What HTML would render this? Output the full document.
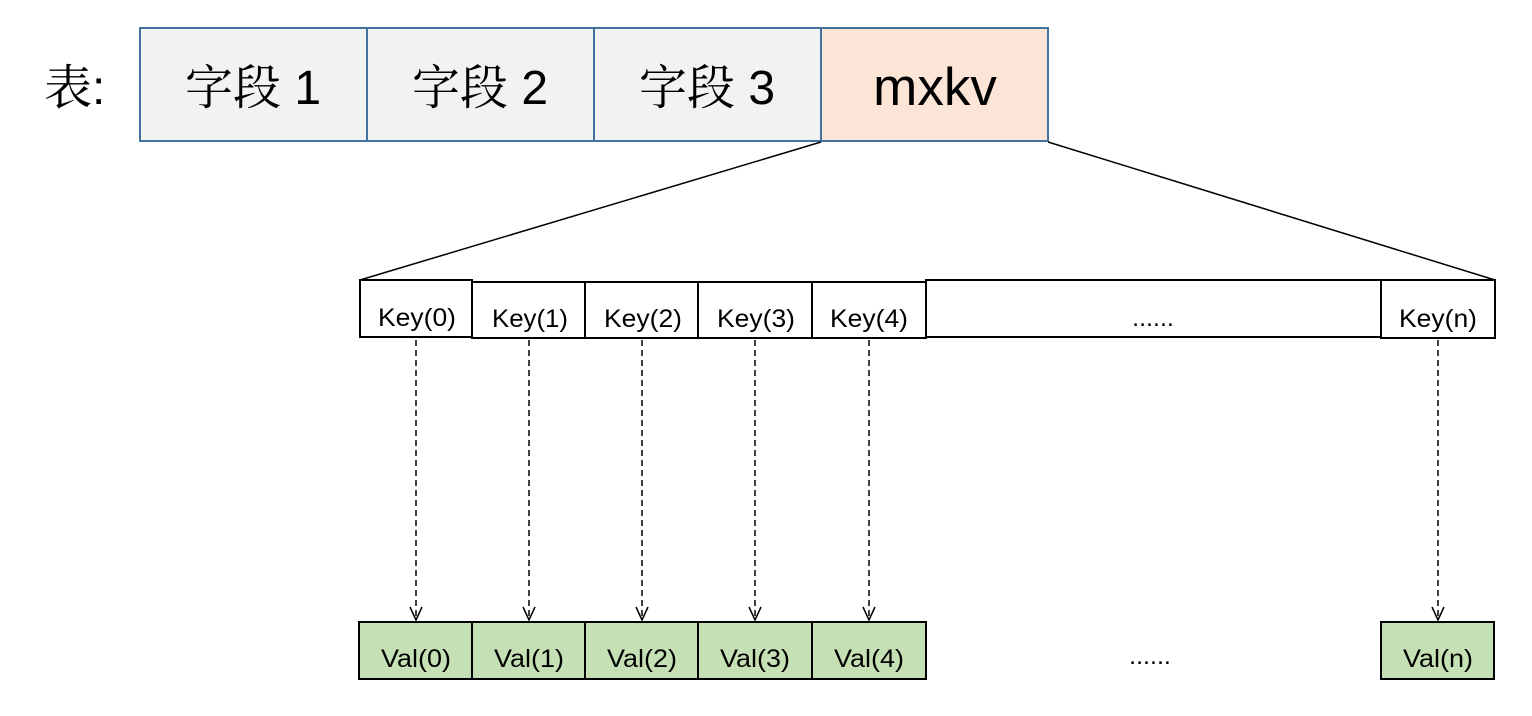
<!DOCTYPE html>
<html><head><meta charset="utf-8"><style>
html,body{margin:0;padding:0;background:#fff;}
svg{display:block}
.cn{font-family:"Noto Serif CJK SC","Liberation Serif",serif;}
.s{font-family:"Liberation Sans",sans-serif;}
</style></head><body>
<svg width="1532" height="716" viewBox="0 0 1532 716" xmlns="http://www.w3.org/2000/svg">
<g stroke="#41719c" stroke-width="2">
<rect x="140" y="28" width="227" height="113" fill="#f2f2f2"/>
<rect x="367" y="28" width="227" height="113" fill="#f2f2f2"/>
<rect x="594" y="28" width="227" height="113" fill="#f2f2f2"/>
<rect x="821" y="28" width="227" height="113" fill="#fbe5d6"/>
</g>
<text x="44" y="104" class="cn" font-size="48">表<tspan class="s">:</tspan></text>
<g font-size="48" text-anchor="middle">
<text x="253" y="104"><tspan class="cn">字段</tspan><tspan class="s"> 1</tspan></text>
<text x="480" y="104"><tspan class="cn">字段</tspan><tspan class="s"> 2</tspan></text>
<text x="707" y="104"><tspan class="cn">字段</tspan><tspan class="s"> 3</tspan></text>
<text x="935" y="105" class="s" font-size="53">mxkv</text>
</g>
<g stroke="#000" stroke-width="1.5">
<line x1="821" y1="142" x2="360" y2="280"/>
<line x1="1048" y1="142" x2="1495" y2="280"/>
</g>
<g stroke="#000" stroke-width="2" fill="#fff">
<rect x="360" y="280" width="112" height="57"/>
<rect x="472" y="282" width="113" height="56"/>
<rect x="585" y="282" width="113" height="56"/>
<rect x="698" y="282" width="114" height="56"/>
<rect x="812" y="282" width="114" height="56"/>
<rect x="926" y="280" width="455" height="57"/>
<rect x="1381" y="280" width="114" height="58"/>
</g>
<g class="s" font-size="25" text-anchor="middle">
<text x="417" y="326" textLength="78" lengthAdjust="spacingAndGlyphs">Key(0)</text>
<text x="530" y="327" textLength="76" lengthAdjust="spacingAndGlyphs">Key(1)</text>
<text x="643" y="327" textLength="78" lengthAdjust="spacingAndGlyphs">Key(2)</text>
<text x="756" y="327" textLength="78" lengthAdjust="spacingAndGlyphs">Key(3)</text>
<text x="869" y="327" textLength="78" lengthAdjust="spacingAndGlyphs">Key(4)</text>
<text x="1153" y="326">......</text>
<text x="1438" y="327" textLength="78" lengthAdjust="spacingAndGlyphs">Key(n)</text>
</g>
<g stroke="#000" stroke-width="1.5" fill="none">
<g stroke-dasharray="6,4">
<line x1="416" y1="340" x2="416" y2="619"/>
<line x1="529" y1="340" x2="529" y2="619"/>
<line x1="642" y1="340" x2="642" y2="619"/>
<line x1="755" y1="340" x2="755" y2="619"/>
<line x1="869" y1="340" x2="869" y2="619"/>
<line x1="1438" y1="340" x2="1438" y2="619"/>
</g>
<path d="M410 607 L416 620 L422 607"/>
<path d="M523 607 L529 620 L535 607"/>
<path d="M636 607 L642 620 L648 607"/>
<path d="M749 607 L755 620 L761 607"/>
<path d="M863 607 L869 620 L875 607"/>
<path d="M1432 607 L1438 620 L1444 607"/>
</g>
<g stroke="#000" stroke-width="2" fill="#c5e0b4">
<rect x="359" y="622" width="113" height="57"/>
<rect x="472" y="622" width="113" height="57"/>
<rect x="585" y="622" width="113" height="57"/>
<rect x="698" y="622" width="114" height="57"/>
<rect x="812" y="622" width="114" height="57"/>
<rect x="1381" y="622" width="113" height="57"/>
</g>
<g class="s" font-size="25" text-anchor="middle">
<text x="416" y="667" textLength="70" lengthAdjust="spacingAndGlyphs">Val(0)</text>
<text x="529" y="667" textLength="70" lengthAdjust="spacingAndGlyphs">Val(1)</text>
<text x="642" y="667" textLength="70" lengthAdjust="spacingAndGlyphs">Val(2)</text>
<text x="755" y="667" textLength="70" lengthAdjust="spacingAndGlyphs">Val(3)</text>
<text x="869" y="667" textLength="70" lengthAdjust="spacingAndGlyphs">Val(4)</text>
<text x="1150" y="664">......</text>
<text x="1438" y="667" textLength="70" lengthAdjust="spacingAndGlyphs">Val(n)</text>
</g>
</svg>
</body></html>
